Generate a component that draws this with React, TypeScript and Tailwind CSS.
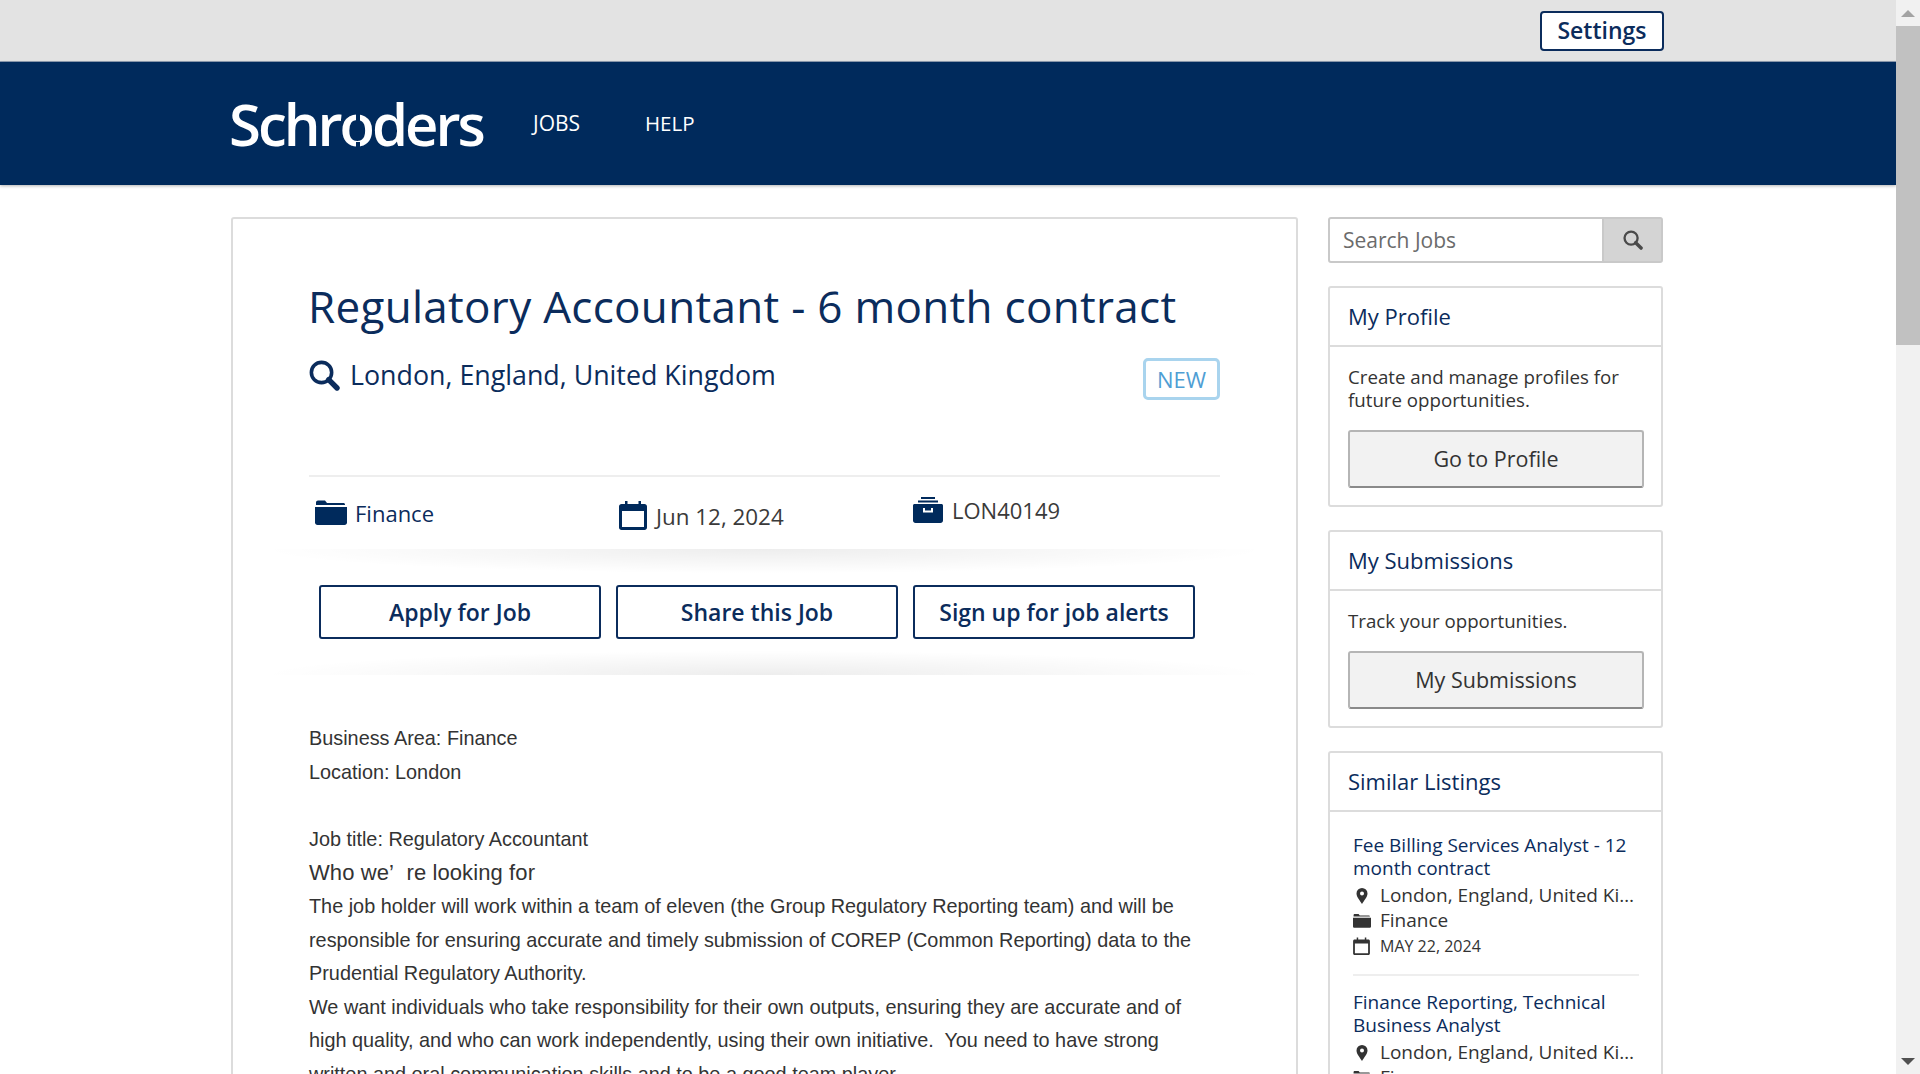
import type { ReactNode } from 'react'

const heading = 'font-["Open_Sans",sans-serif]'

function SearchIcon({ className }: { className: string }) {
  return (
    <svg viewBox="0 0 26 26" className={className} fill="none" stroke="currentColor">
      <circle cx="10.500" cy="10.500" r="8.500" strokeWidth="3" />
      <path d="M16.500 16.500L23.500 23.500" strokeWidth="4.500" strokeLinecap="round" />
    </svg>
  )
}

function FolderIcon({ className }: { className: string }) {
  return (
    <svg viewBox="0 0 32 26" className={className} fill="currentColor">
      <path d="M1 3.500C1 2.400 1.900 1.500 3 1.500h7l2 2.500h16.500c.8 0 1.500.7 1.500 1.500V6H1z" />
      <path d="M0 8h32v15.500c0 1.400-1.100 2.500-2.500 2.500h-27C1.100 26 0 24.900 0 23.500z" />
    </svg>
  )
}

function CalendarIcon({ className }: { className: string }) {
  return (
    <svg viewBox="0 0 28 30" className={className} fill="currentColor">
      <path fillRule="evenodd" d="M2.500 4H6V1h2.500v3h11V1H22v3h3.500C26.900 4 28 5.100 28 6.500v21c0 1.400-1.100 2.500-2.500 2.500h-23C1.100 30 0 28.900 0 27.500v-21C0 5.100 1.100 4 2.500 4zM3 11v16h22V11z" />
    </svg>
  )
}

function ArchiveIcon({ className }: { className: string }) {
  return (
    <svg viewBox="0 0 30 26" className={className} fill="currentColor">
      <path d="M8 0h14v2H8zM5 3.500h20v2H5zM1.500 7h27c.8 0 1.500.7 1.500 1.500V23.500c0 1.400-1.100 2.500-2.500 2.500h-25C1.100 26 0 24.900 0 23.500V8.500C0 7.700.7 7 1.500 7z" />
      <path fill="#ffffff" d="M10 11h2v2.500h6V11h2v4.500H10z" />
    </svg>
  )
}

function PinIcon({ className }: { className: string }) {
  return (
    <svg viewBox="0 0 12 16" className={className} fill="currentColor">
      <path fillRule="evenodd" d="M6 0a5.500 5.500 0 0 1 5.500 5.500C11.500 9 8 12.500 6 16 4 12.500.5 9 .5 5.500A5.500 5.500 0 0 1 6 0zm0 3.500a2 2 0 1 0 0 4 2 2 0 0 0 0-4z" />
    </svg>
  )
}

const listings = [
  { title: 'Fee Billing Services Analyst - 12 month contract', date: 'MAY 22, 2024' },
  { title: 'Finance Reporting, Technical Business Analyst', date: 'MAY 22, 2024' },
]

function Panel({ title, children }: { title: string; children: ReactNode }) {
  return (
    <div className="rounded-[3px] border-2 border-[#dcdcdc] bg-white">
      <div className="flex h-[59px] items-center border-b-2 border-[#dcdcdc] px-[18px] text-[22px] text-[#0b2c5c]">{title}</div>
      {children}
    </div>
  )
}

export default function App() {
  return (
    <div className={`flex h-screen overflow-hidden bg-white ${heading}`}>
      <div className="min-w-0 flex-1">
        {/* top bar */}
        <div className="flex h-[62px] items-center justify-end border-b border-[#8f9db3] bg-[#e3e3e3] pr-[232px]">
          <button className="h-[40px] w-[124px] rounded-[4px] border-2 border-[#0b2c5c] bg-white text-[23px] font-semibold text-[#0b2c5c]">Settings</button>
        </div>

        {/* nav */}
        <div className="flex h-[123px] items-center bg-[#002a5c] pl-[231px] text-white shadow-[0_1px_3px_rgba(0,0,0,0.3)]">
          <div className="relative -ml-[2px] w-[304px] text-[58px] leading-none font-semibold tracking-[-3px]">
            Schroders
            <span className="absolute top-[19px] left-[127px] h-[7px] w-[4px] bg-[#002a5c]" />
            <span className="absolute top-[47px] left-[127px] h-[7px] w-[4px] bg-[#002a5c]" />
          </div>
          <a className="w-[112px] text-[21px]">JOBS</a>
          <a className="text-[20.500px]">HELP</a>
        </div>

        <div className="flex items-start gap-[30px] pt-[32px] pl-[231px]">
          {/* main card */}
          <div className="h-[900px] w-[1067px] shrink-0 rounded-[3px] border-2 border-[#dcdcdc] px-[76px] pt-[57px]">
            <h1 className="-ml-[1px] text-[44px] leading-[60px] tracking-[0.3px] text-[#0b2c5c]">Regulatory Accountant - 6 month contract</h1>
            <div className="mt-[19px] flex h-[64px] items-start justify-between">
              <div className="flex items-center gap-[10px] text-[26.800px] text-[#0b2c5c]">
                <SearchIcon className="size-[31px]" />
                London, England, United Kingdom
              </div>
              <span className="mt-[3px] flex h-[42px] w-[77px] items-center justify-center rounded-[5px] border-[3px] border-[#a9d4ee] text-[22px] text-[#4f9ed4]">NEW</span>
            </div>

            <div className="mt-[56px] flex h-[74px] items-center border-t-2 border-[#eeeeee]">
              <div className="flex w-[310px] items-center gap-[8px] pl-[6px] text-[22px] text-[#0b2c5c]">
                <FolderIcon className="mb-[3px] h-[26px] w-[32px] text-[#002a5c]" />
                Finance
              </div>
              <div className="flex w-[294px] items-center gap-[9px] pt-[7px] text-[22.400px] text-[#3a3a3a]">
                <CalendarIcon className="mb-[3px] h-[30px] w-[28px] text-[#002a5c]" />
                Jun 12, 2024
              </div>
              <div className="flex items-center gap-[9px] pb-[6px] text-[22px] text-[#3a3a3a]">
                <ArchiveIcon className="h-[26px] w-[30px] text-[#002a5c]" />
                LON40149
              </div>
            </div>

            <div className="-mx-[40px] h-[24px] bg-[radial-gradient(ellipse_at_top,rgba(0,0,0,0.07),transparent_72%)]" />
            <div className="flex gap-[15px] px-[10px] py-[12px]">
              {['Apply for Job', 'Share this Job', 'Sign up for job alerts'].map(b => (
                <button key={b} className="h-[54px] w-[282px] rounded-[3px] border-2 border-[#0b2c5c] bg-white text-[23px] font-semibold text-[#0b2c5c]">{b}</button>
              ))}
            </div>
            <div className="-mx-[40px] h-[24px] bg-[radial-gradient(ellipse_at_bottom,rgba(0,0,0,0.07),transparent_72%)]" />

            <div className='mt-[47px] pr-[20px] font-["Liberation_Sans",sans-serif] text-[19.850px] leading-[33.600px] text-[#333333]'>
              <p>Business Area: Finance</p>
              <p>Location: London</p>
              <p>&nbsp;</p>
              <p>Job title: Regulatory Accountant</p>
              <p className="text-[22px] tracking-[0.1px]">Who we’&nbsp; re looking for</p>
              <p>The job holder will work within a team of eleven (the Group Regulatory Reporting team) and will be responsible for ensuring accurate and timely submission of COREP (Common Reporting) data to the Prudential Regulatory Authority.</p>
              <p>We want individuals who take responsibility for their own outputs, ensuring they are accurate and of high quality, and who can work independently, using their own initiative.&nbsp; You need to have strong written and oral communication skills and to be a good team player.</p>
            </div>
          </div>

          {/* sidebar */}
          <div className="flex w-[335px] shrink-0 flex-col gap-[23px]">
            <div className="flex h-[46px] rounded-[3px] border-2 border-[#c9c9c9]">
              <div className="flex flex-1 items-center pt-[2px] pl-[13px] text-[21px] text-[#6b6b6b]">Search Jobs</div>
              <div className="flex w-[59px] items-center justify-center border-l-2 border-[#c9c9c9] bg-[#d4d4d4] text-[#4a4a4a]">
                <SearchIcon className="size-[20px]" />
              </div>
            </div>

            <Panel title="My Profile">
              <div className="pt-[18px] pr-[17px] pb-[17px] pl-[18px]">
                <p className="text-[18.700px] leading-[23px] text-[#333333]">Create and manage profiles for future opportunities.</p>
                <button className="mt-[19px] h-[58px] w-full rounded-[3px] border-2 border-[#b5b5b5] border-b-[#8a8a8a] bg-[#f2f2f2] text-[21.500px] text-[#333333]">Go to Profile</button>
              </div>
            </Panel>

            <Panel title="My Submissions">
              <div className="pt-[18px] pr-[17px] pb-[17px] pl-[18px]">
                <p className="text-[18.700px] leading-[23px] text-[#333333]">Track your opportunities.</p>
                <button className="mt-[19px] h-[58px] w-full rounded-[3px] border-2 border-[#b5b5b5] border-b-[#8a8a8a] bg-[#f2f2f2] text-[21.500px] text-[#333333]">My Submissions</button>
              </div>
            </Panel>

            <Panel title="Similar Listings">
              <div className="pr-[22px] pt-[22px] pl-[23px]">
                {listings.map((l, i) => (
                  <div key={l.title} className={i === 0 ? 'border-b-2 border-[#eeeeee] pb-[16px]' : 'pt-[15px]'}>
                    <div className="text-[19px] leading-[23px] text-[#0b2c5c]">{l.title}</div>
                    <div className="mt-[3px] flex h-[25px] items-center text-[19px] text-[#333333]">
                      <span className="flex w-[27px] shrink-0 pl-[3px]"><PinIcon className="h-[16px] w-[12px]" /></span>
                      <span className="truncate">London, England, United Kingdom</span>
                    </div>
                    <div className="flex h-[25px] items-center text-[19px] text-[#333333]">
                      <span className="flex w-[27px] shrink-0"><FolderIcon className="h-[15px] w-[18px]" /></span>
                      Finance
                    </div>
                    <div className="flex h-[25px] items-center text-[16px] text-[#333333]">
                      <span className="flex w-[27px] shrink-0"><CalendarIcon className="h-[18px] w-[17px]" /></span>
                      {l.date}
                    </div>
                  </div>
                ))}
              </div>
            </Panel>
          </div>
        </div>
      </div>

      {/* scrollbar */}
      <div className="flex h-screen w-[24px] shrink-0 flex-col items-center justify-between bg-[#f1f1f1]">
        <div className="flex w-full flex-col items-center">
          <div className="flex h-[26px] items-center"><div className="size-0 border-x-[7px] border-b-[7px] border-x-transparent border-b-[#a3a3a3]" /></div>
          <div className="h-[319px] w-full bg-[#c1c1c1]" />
        </div>
        <div className="flex h-[26px] items-center"><div className="size-0 border-x-[7px] border-t-[7px] border-x-transparent border-t-[#505050]" /></div>
      </div>
    </div>
  )
}
